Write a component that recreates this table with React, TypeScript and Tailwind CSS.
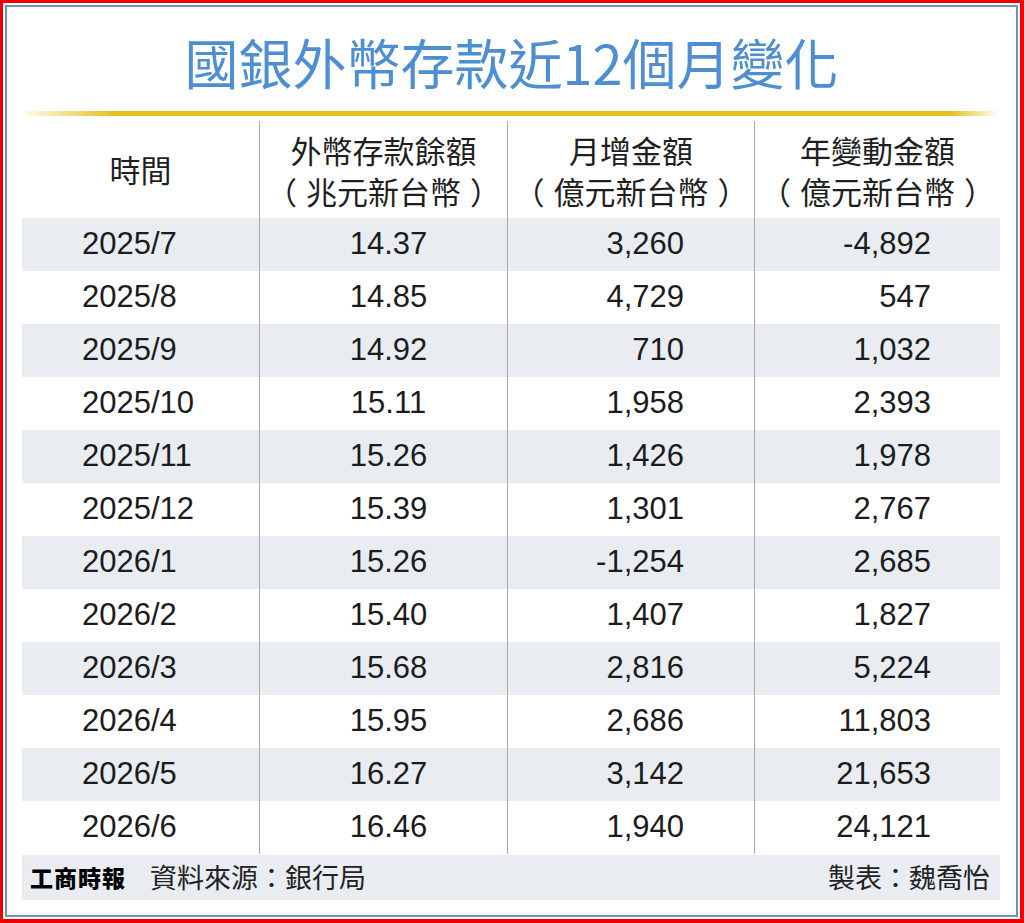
const rows: [string, string, string, string][] = [
  ["2025/7", "14.37", "3,260", "-4,892"],
  ["2025/8", "14.85", "4,729", "547"],
  ["2025/9", "14.92", "710", "1,032"],
  ["2025/10", "15.11", "1,958", "2,393"],
  ["2025/11", "15.26", "1,426", "1,978"],
  ["2025/12", "15.39", "1,301", "2,767"],
  ["2026/1", "15.26", "-1,254", "2,685"],
  ["2026/2", "15.40", "1,407", "1,827"],
  ["2026/3", "15.68", "2,816", "5,224"],
  ["2026/4", "15.95", "2,686", "11,803"],
  ["2026/5", "16.27", "3,142", "21,653"],
  ["2026/6", "16.46", "1,940", "24,121"],
];

const cjk = { fontFamily: "'Noto Sans CJK TC', 'Noto Sans', sans-serif" };
const num = { fontFamily: "'Liberation Sans', Arial, sans-serif" };

function Unit({ text }: { text: string }) {
  return (
    <span className="flex items-center">
      <span className="shrink-0 mr-[9px]">（</span>
      <span>{text}</span>
      <span className="shrink-0 ml-[9px]">）</span>
    </span>
  );
}

export default function App() {
  return (
    <div className="w-[1024px] h-[923px] bg-white border-[3px] border-[#f20000] border-r-4 border-b-4 p-[2px]">
      <div className="h-full border-2 border-[#7292ad] pl-[15px] pr-[15px] flex flex-col">
        {/* Title */}
        <h1
          className="mt-[28px] text-center text-[54px] leading-[54px] text-[#4d8fd2]"
          style={cjk}
        >
          國銀外幣存款近12個月變化
        </h1>

        {/* Gold rule */}
        <div className="mt-[22px] ml-[3px] h-[5px] w-[975px] bg-[linear-gradient(to_right,#fffbea_0%,#e6c21f_9%,#e6c21f_95%,#ffffff_100%)]" />

        {/* Table */}
        <div className="mt-[5px] w-[978px] grid grid-cols-[237px_248px_247px_246px]">
          <div className="h-[97px] flex items-center justify-center text-[31px] text-[#1f1f1f]" style={cjk}>
            時間
          </div>
          {[
            ["外幣存款餘額", "兆元新台幣"],
            ["月增金額", "億元新台幣"],
            ["年變動金額", "億元新台幣"],
          ].map(([a, b]) => (
            <div
              key={a}
              className="h-[97px] border-l border-[#a9a9a9] flex flex-col items-center justify-center text-[31px] leading-[41px] text-[#1f1f1f]"
              style={cjk}
            >
              <span>{a}</span>
              <Unit text={b} />
            </div>
          ))}

          {rows.map((r, i) => {
            const bg = i % 2 === 0 ? "bg-[#e9edf2]" : "bg-white";
            return [
              <div key={`${i}a`} className={`${bg} h-[53px] flex items-center pl-[60px] text-[31px] text-[#1c1c1c]`} style={num}>
                {r[0]}
              </div>,
              <div key={`${i}b`} className={`${bg} h-[53px] border-l border-[#a9a9a9] flex items-center justify-center pl-[10px] text-[31px] text-[#1c1c1c]`} style={num}>
                {r[1]}
              </div>,
              <div key={`${i}c`} className={`${bg} h-[53px] border-l border-[#a9a9a9] flex items-center justify-end pr-[70px] text-[31px] text-[#1c1c1c]`} style={num}>
                {r[2]}
              </div>,
              <div key={`${i}d`} className={`${bg} h-[53px] border-l border-[#a9a9a9] flex items-center justify-end pr-[69px] text-[31px] text-[#1c1c1c]`} style={num}>
                {r[3]}
              </div>,
            ];
          })}
        </div>

        {/* Footer */}
        <div className="mt-[1px] w-[978px] h-[45px] bg-[#e9edf2] flex items-center justify-between pl-[8px] pr-[10px] text-[#222]" style={cjk}>
          <div className="flex items-center gap-[24px]">
            <span className="text-[23px] font-black tracking-[1px] text-black">工商時報</span>
            <span className="text-[27px]">資料來源：銀行局</span>
          </div>
          <span className="text-[27px]">製表：魏喬怡</span>
        </div>
      </div>
    </div>
  );
}
